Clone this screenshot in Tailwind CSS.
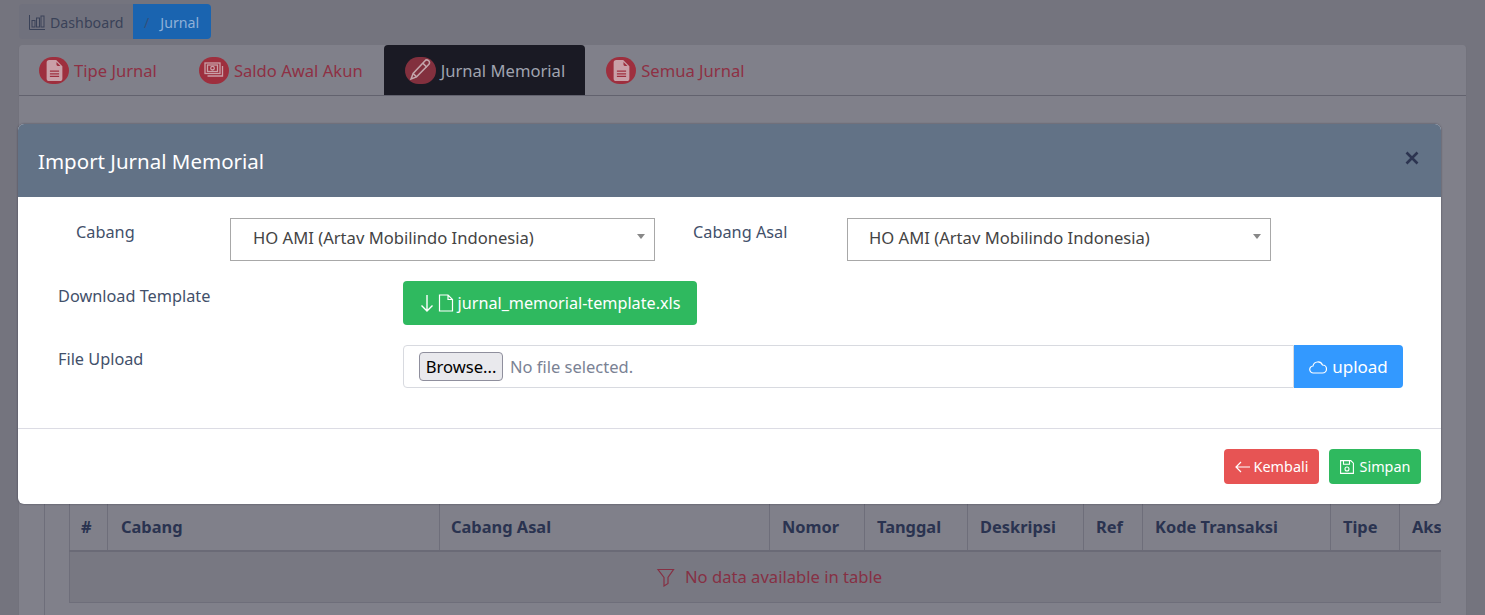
<!DOCTYPE html>
<html lang="id">
<head>
    <meta charset="UTF-8">
    <title>Import Jurnal Memorial</title>
    <script src="https://cdn.jsdelivr.net/npm/@tailwindcss/browser@4"></script>
</head>
<body class="relative h-[615px] overflow-hidden bg-[#74747e] font-['Noto_Sans','Open_Sans',sans-serif] text-[#2a3350]">

    <!-- Page behind the modal -->
    <div class="pl-[18px] pr-[18px] pt-[4px]">

        <!-- Breadcrumb -->
        <nav class="ml-[1px] flex h-[35px] w-[192px] text-[14.2px]">
            <a class="flex w-[114px] items-center gap-[5px] rounded-l-[4px] bg-[#70717d] pl-[10px] text-[#3a4258]">
                <svg class="h-[16px] w-[16px]" viewBox="0 0 16 16" fill="none" stroke="currentColor" stroke-width="1"><path d="M.5 1v14.500H16"/><rect x="3" y="6.500" width="3" height="6.500"/><rect x="7.500" y="4" width="3" height="9"/><rect x="12" y="2" width="3" height="11"/></svg>
                <span class="pt-[2px]">Dashboard</span>
            </a>
            <a class="flex flex-1 items-center gap-[11px] rounded-r-[4px] bg-[#1a64b0] pl-[11px] pt-[2px] text-[#8fb0d8]">
                <span class="text-[#33507c]">/</span>
                <span>Jurnal</span>
            </a>
        </nav>

        <!-- Card -->
        <div class="mt-[6px] h-[640px] rounded-t-[4px] border-x border-[#72727c] bg-[#80808a]">
            <ul class="flex h-[51px] border-b border-[#62626e] text-[16.600px] text-[#8e3044]">
                <li class="flex items-center gap-[5px] pl-[20px] pr-[28px]">
                    <span class="flex h-[27px] w-[30px] items-center justify-center rounded-full bg-[#9e2f3e] text-[#c9a0a8]">
                        <svg class="h-[21px] w-[21px]" viewBox="0 0 16 16" fill="currentColor"><path d="M9.300 0H4a2 2 0 0 0-2 2v12a2 2 0 0 0 2 2h8a2 2 0 0 0 2-2V4.700L9.300 0zM9.500 3.500v-2l3 3h-2a1 1 0 0 1-1-1zM4.500 8h7v1h-7V8zm0 2h7v1h-7v-1zm0 2h7v1h-7v-1z" fill-rule="evenodd"/></svg>
                    </span>
                    <span class="pt-[3px]">Tipe Jurnal</span>
                </li>
                <li class="flex items-center gap-[5px] pl-[14px] pr-[21px]">
                    <span class="flex h-[27px] w-[30px] items-center justify-center rounded-full bg-[#9e2f3e] text-[#c9a0a8]">
                        <svg class="h-[18px] w-[20px]" viewBox="0 0 20 18" fill="none" stroke="currentColor" stroke-width="1.300"><rect x="1" y="2" width="15" height="10.500"/><rect x="3.500" y="4" width="10" height="6.500"/><circle cx="8.500" cy="7.200" r="1.800"/><path d="M18.500 5v10H3.500"/></svg>
                    </span>
                    <span class="pt-[3px]">Saldo Awal Akun</span>
                </li>
                <li class="flex items-center gap-[5px] rounded-t-[4px] bg-[#1a1a24] pl-[21px] pr-[20px] text-[#a0a4b0]">
                    <span class="flex h-[27px] w-[31px] items-center justify-center rounded-full bg-[#82303e] text-[#c4a6ac]">
                        <svg class="h-[22px] w-[22px]" viewBox="0 0 16 16" fill="none" stroke="currentColor" stroke-width="1.100"><path d="M11.500 1.500a1.800 1.800 0 0 1 3 2.400L5.500 13 1.500 14.500 3 10.500l8.500-9z"/><path d="M10 3l3 3M3 10.500l2.500 2.500"/></svg>
                    </span>
                    <span class="pt-[3px]">Jurnal Memorial</span>
                </li>
                <li class="flex items-center gap-[5px] pl-[21px]">
                    <span class="flex h-[27px] w-[30px] items-center justify-center rounded-full bg-[#9e2f3e] text-[#c9a0a8]">
                        <svg class="h-[21px] w-[21px]" viewBox="0 0 16 16" fill="currentColor"><path d="M9.300 0H4a2 2 0 0 0-2 2v12a2 2 0 0 0 2 2h8a2 2 0 0 0 2-2V4.700L9.300 0zM9.500 3.500v-2l3 3h-2a1 1 0 0 1-1-1zM4.500 8h7v1h-7V8zm0 2h7v1h-7v-1zm0 2h7v1h-7v-1z" fill-rule="evenodd"/></svg>
                    </span>
                    <span class="pt-[3px]">Semua Jurnal</span>
                </li>
            </ul>

            <!-- Inner card with the table -->
            <div class="ml-[25px] mr-[25px] mt-[30px] h-[600px] overflow-hidden border-l border-[#6e6e7a] pl-[24px] pt-[378px]">
                <table class="w-[1400px] table-fixed border-collapse text-[16.400px] font-bold">
                    <colgroup>
                        <col class="w-[38px]"><col class="w-[332px]"><col class="w-[330px]"><col class="w-[95px]"><col class="w-[103px]"><col class="w-[116px]"><col class="w-[59px]"><col class="w-[188px]"><col class="w-[69px]"><col class="w-[70px]">
                    </colgroup>
                    <thead>
                        <tr class="h-[47px] border-b-2 border-[#6a6a76] text-left">
                            <th class="border-l border-r border-[#6e6e7a] pl-[11px]">#</th>
                            <th class="border-r border-[#6e6e7a] pl-[13px]">Cabang</th>
                            <th class="border-r border-[#6e6e7a] pl-[11px]">Cabang Asal</th>
                            <th class="border-r border-[#6e6e7a] pl-[12px]">Nomor</th>
                            <th class="border-r border-[#6e6e7a] pl-[12px]">Tanggal</th>
                            <th class="border-r border-[#6e6e7a] pl-[12px]">Deskripsi</th>
                            <th class="border-r border-[#6e6e7a] pl-[12px]">Ref</th>
                            <th class="border-r border-[#6e6e7a] pl-[12px]">Kode Transaksi</th>
                            <th class="border-r border-[#6e6e7a] pl-[12px]">Tipe</th>
                            <th class="pl-[12px]">Aksi</th>
                        </tr>
                    </thead>
                    <tbody>
                        <tr class="h-[51px] border-b border-l border-[#6e6e7a] bg-[#787882]">
                            <td colspan="8" class="pl-[586px] text-left text-[16.600px] font-normal text-[#863044]">
                                <span class="flex items-center gap-[9px]">
                                    <svg class="h-[20px] w-[20px]" viewBox="0 0 20 20" fill="none" stroke="currentColor" stroke-width="1.200"><path d="M2 2.500h15.500L12 10.500v6l-4 2.500v-8.500L2 2.500z"/></svg>
                                    <span class="pt-[2px]">No data available in table</span>
                                </span>
                            </td>
                            <td colspan="2"></td>
                        </tr>
                    </tbody>
                </table>
            </div>
        </div>
    </div>

    <!-- Modal -->
    <div class="absolute left-[18px] top-[124px] w-[1423px] overflow-hidden rounded-[6px] bg-white text-[#42506a] shadow-[0_0_2px_rgba(30,30,50,0.6)]">
        <div class="flex h-[73px] items-center justify-between bg-[#627286] pl-[20px] pr-[22px] text-white">
            <h5 class="pt-[2px] text-[20.500px] font-normal">Import Jurnal Memorial</h5>
            <svg class="-mt-[5px] h-[14px] w-[14px] text-[#2c3450]" viewBox="0 0 14 14" fill="none" stroke="currentColor" stroke-width="2.600"><path d="M1.500 1.500l11 11M12.500 1.500l-11 11"/></svg>
        </div>

        <div class="h-[232px] border-b border-[#dcdce4] pt-[21px] text-[16.300px]">
            <div class="flex h-[43px]">
                <label class="w-[212px] pl-[58px] pt-[2px]">Cabang</label>
                <div class="relative flex h-[43px] w-[425px] items-center border border-[#a8a8a8] pb-[3px] pl-[22px] text-[16.600px] text-[#444]">
                    HO AMI (Artav Mobilindo Indonesia)
                    <span class="absolute right-[9px] top-[15px] border-x-[4px] border-t-[5px] border-x-transparent border-t-[#888]"></span>
                </div>
                <label class="w-[192px] pl-[38px] pt-[2px]">Cabang Asal</label>
                <div class="relative flex h-[43px] w-[424px] items-center border border-[#a8a8a8] pb-[3px] pl-[21px] text-[16.600px] text-[#444]">
                    HO AMI (Artav Mobilindo Indonesia)
                    <span class="absolute right-[9px] top-[15px] border-x-[4px] border-t-[5px] border-x-transparent border-t-[#888]"></span>
                </div>
            </div>

            <div class="mt-[20px] flex h-[44px]">
                <label class="w-[385px] pl-[40px] pt-[3px]">Download Template</label>
                <a class="flex w-[294px] items-center justify-center gap-[4px] rounded-[4px] bg-[#2fb95f] text-[16.200px] text-white">
                    <svg class="h-[20px] w-[14px]" viewBox="0 0 14 20" fill="none" stroke="currentColor" stroke-width="1.400"><path d="M7 2v16M1.500 12.500L7 18l5.500-5.500"/></svg>
                    <svg class="h-[18px] w-[16px]" viewBox="0 0 16 18" fill="none" stroke="currentColor" stroke-width="1.200"><path d="M1.500 1h8.500l4.500 4.500V17h-13zM10 1v4.500h4.500"/></svg>
                    <span>jurnal_memorial-template.xls</span>
                </a>
            </div>

            <div class="mt-[20px] flex h-[43px]">
                <label class="w-[385px] pl-[40px] pt-[2px]">File Upload</label>
                <div class="flex w-[891px] items-center rounded-l-[4px] border border-[#d8dae0] pl-[15px] text-[16.500px] text-[#7a8294]">
                    <button class="h-[29px] w-[84px] rounded-[4px] border border-[#8f8f9d] bg-[#e9e9ed] pt-[2px] text-center text-[16.600px] leading-none text-black">Browse...</button>
                    <span class="ml-[7px] pt-[2px]">No file selected.</span>
                </div>
                <a class="flex w-[109px] items-center justify-center gap-[5px] rounded-r-[4px] bg-[#3399ff] text-[17px] text-white">
                    <svg class="h-[16px] w-[18px]" viewBox="0 0 18 16" fill="none" stroke="currentColor" stroke-width="1.200"><path d="M4.500 14a3.500 3.500 0 0 1-.5-7A5 5 0 0 1 13.500 6a4 4 0 0 1 0 8h-9z"/></svg>
                    <span>upload</span>
                </a>
            </div>
        </div>

        <div class="flex h-[75px] items-center justify-end gap-[10px] pr-[20px] text-[14.400px] text-white">
            <a class="flex h-[35px] w-[95px] items-center justify-center gap-[4px] rounded-[4px] bg-[#e75454]">
                <svg class="h-[12px] w-[15px]" viewBox="0 0 15 12" fill="none" stroke="currentColor" stroke-width="1.200"><path d="M15 6H1M6 1L1 6l5 5"/></svg>
                <span class="pt-[1px]">Kembali</span>
            </a>
            <a class="flex h-[35px] w-[92px] items-center justify-center gap-[6px] rounded-[4px] bg-[#2fb95f]">
                <svg class="h-[14px] w-[14px]" viewBox="0 0 14 14" fill="none" stroke="currentColor" stroke-width="1.100"><path d="M.6.6h10.200l2.600 2.600v10.200H.6z"/><path d="M3.500.6v3.600h6V.6"/><circle cx="7" cy="9" r="2"/></svg>
                <span class="pt-[1px]">Simpan</span>
            </a>
        </div>
    </div>

</body>
</html>
